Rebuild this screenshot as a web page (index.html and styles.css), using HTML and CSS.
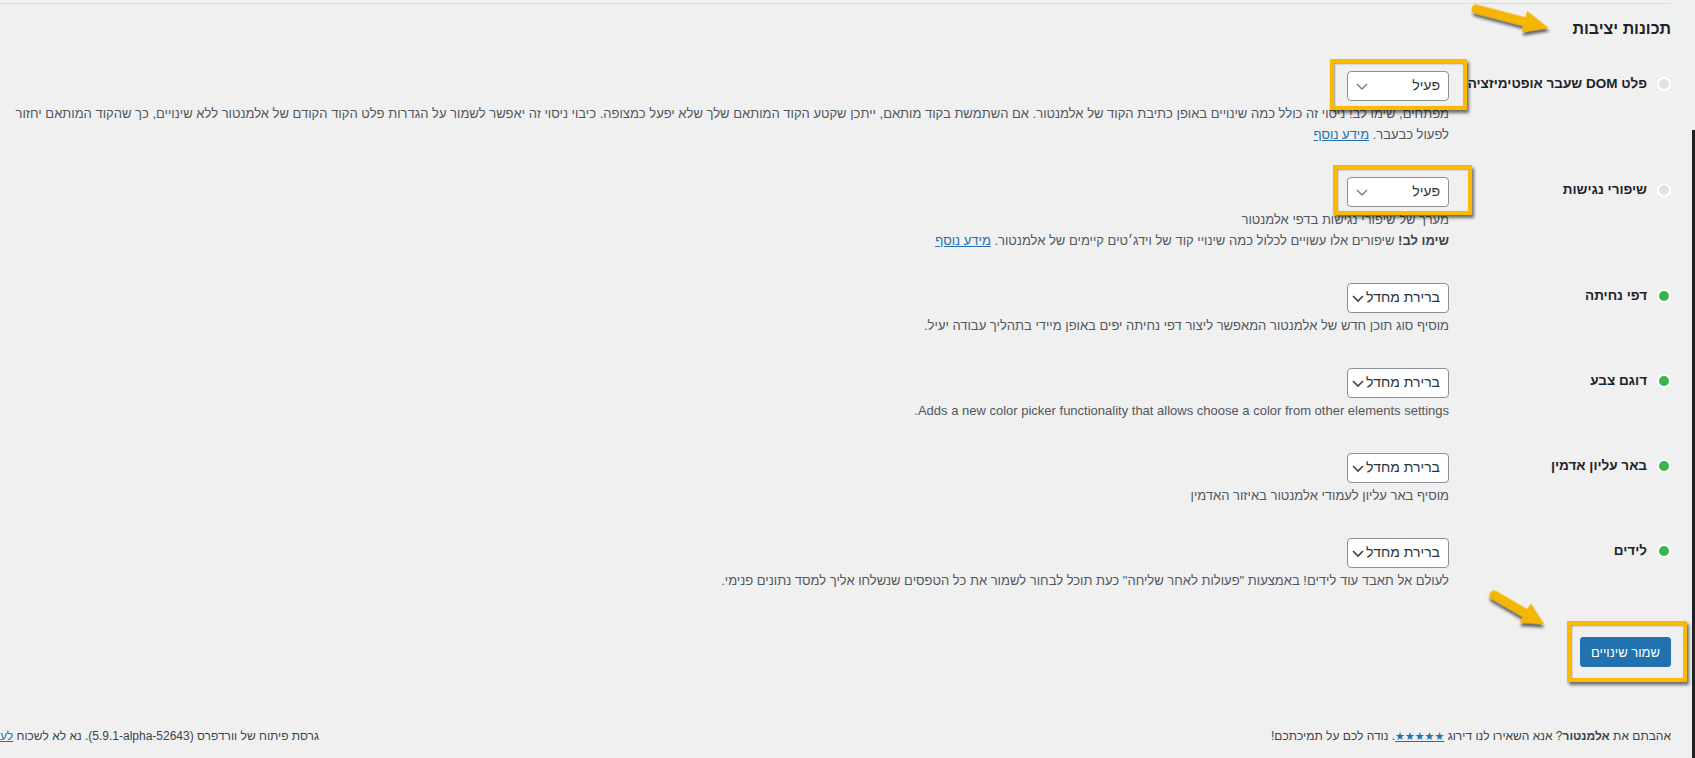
FILE: index.html
```html
<!DOCTYPE html>
<html lang="he" dir="rtl">
  <head>
    <meta charset="UTF-8" />
    <meta name="viewport" content="width=device-width, initial-scale=1.0" />
    <title>ניסויים</title>
    <link rel="stylesheet" href="styles.css">
  </head>
  <body>
    <div class="admin-edge"></div>
    <div class="wrap">
      <div class="tabs-line"></div>
      <h2 class="section-title">תכונות יציבות</h2>

      <div class="exp-list">
        <div class="exp-row">
          <div class="exp-title"><span class="dot"></span>פלט DOM שעבר אופטימיזציה</div>
          <div class="exp-field">
            <div class="select"><span>פעיל</span><svg class="chev" width="16" height="16" viewBox="0 0 16 16"><polyline points="3,6 8,11 13,6" /></svg></div>
            <p class="desc">מפתחים, שימו לב! ניסוי זה כולל כמה שינויים באופן כתיבת הקוד של אלמנטור. אם השתמשת בקוד מותאם, ייתכן שקטע הקוד המותאם שלך שלא יפעל כמצופה. כיבוי ניסוי זה יאפשר לשמור על הגדרות פלט הקוד הקודם של אלמנטור ללא שינויים, כך שהקוד המותאם יחזור<br>לפעול כבעבר. <a href="#">מידע נוסף</a></p>
          </div>
        </div>

        <div class="exp-row">
          <div class="exp-title"><span class="dot"></span>שיפורי נגישות</div>
          <div class="exp-field">
            <div class="select"><span>פעיל</span><svg class="chev" width="16" height="16" viewBox="0 0 16 16"><polyline points="3,6 8,11 13,6" /></svg></div>
            <p class="desc">מערך של שיפורי נגישות בדפי אלמנטור<br><strong>שימו לב!</strong> שיפורים אלו עשויים לכלול כמה שינויי קוד של וידג׳טים קיימים של אלמנטור. <a href="#">מידע נוסף</a></p>
          </div>
        </div>

        <div class="exp-row">
          <div class="exp-title"><span class="dot on"></span>דפי נחיתה</div>
          <div class="exp-field">
            <div class="select"><span>ברירת מחדל</span><svg class="chev dark" width="16" height="16" viewBox="0 0 16 16"><polyline points="3,6 8,11 13,6" /></svg></div>
            <p class="desc">מוסיף סוג תוכן חדש של אלמנטור המאפשר ליצור דפי נחיתה יפים באופן מיידי בתהליך עבודה יעיל.</p>
          </div>
        </div>

        <div class="exp-row">
          <div class="exp-title"><span class="dot on"></span>דוגם צבע</div>
          <div class="exp-field">
            <div class="select"><span>ברירת מחדל</span><svg class="chev dark" width="16" height="16" viewBox="0 0 16 16"><polyline points="3,6 8,11 13,6" /></svg></div>
            <p class="desc">Adds a new color picker functionality that allows choose a color from other elements settings.</p>
          </div>
        </div>

        <div class="exp-row">
          <div class="exp-title"><span class="dot on"></span>באר עליון אדמין</div>
          <div class="exp-field">
            <div class="select"><span>ברירת מחדל</span><svg class="chev dark" width="16" height="16" viewBox="0 0 16 16"><polyline points="3,6 8,11 13,6" /></svg></div>
            <p class="desc">מוסיף באר עליון לעמודי אלמנטור באיזור האדמין</p>
          </div>
        </div>

        <div class="exp-row">
          <div class="exp-title"><span class="dot on"></span>לידים</div>
          <div class="exp-field">
            <div class="select"><span>ברירת מחדל</span><svg class="chev dark" width="16" height="16" viewBox="0 0 16 16"><polyline points="3,6 8,11 13,6" /></svg></div>
            <p class="desc">לעולם אל תאבד עוד לידים! באמצעות "פעולות לאחר שליחה" כעת תוכל לבחור לשמור את כל הטפסים שנשלחו אליך למסד נתונים פנימי.</p>
          </div>
        </div>
      </div>

      <p class="submit"><button class="btn-primary">שמור שינויים</button></p>

      <div class="footer">
        <p class="footer-left">אהבתם את <strong>אלמנטור</strong>? אנא השאירו לנו דירוג <a href="#" class="stars">★★★★★</a>. נודה לכם על תמיכתכם!</p>
        <p class="footer-upgrade">גרסת פיתוח של וורדפרס <span dir="ltr">(5.9.1-alpha-52643)</span>. נא לא לשכוח <a href="#">לעדכן</a>.</p>
      </div>
    </div>

    <!-- annotations drawn over the screenshot -->
    <div class="mark mark-1"></div>
    <div class="mark mark-2"></div>
    <div class="mark mark-3"></div>
    <svg class="arrows" width="1695" height="758" viewBox="0 0 1695 758">
      <defs>
        <filter id="shade" x="-20%" y="-40%" width="140%" height="180%">
          <feDropShadow dx="2" dy="3" stdDeviation="1.5" flood-color="#000" flood-opacity="0.6" />
        </filter>
      </defs>
      <g filter="url(#shade)" transform="translate(1476 9) rotate(14.6)">
        <line x1="0" y1="0" x2="56" y2="0" class="arrow-shaft" />
        <polygon points="50,-11 75,0 50,11" class="arrow-head" />
      </g>
      <g filter="url(#shade)" transform="translate(1494 595) rotate(30)">
        <line x1="0" y1="0" x2="40" y2="0" class="arrow-shaft" />
        <polygon points="36,-11 58,0 36,11" class="arrow-head" />
      </g>
    </svg>
  </body>
</html>
```

FILE: styles.css
```css
html {
  overflow: hidden;
}
body {
  margin: 0;
  background-color: #f0f0f1;
  color: #3c434a;
  font-family: "Liberation Sans", Arial, sans-serif;
  font-size: 13px;
  line-height: 1.4;
  position: relative;
  height: 758px;
}
a {
  color: #2271b1;
  text-decoration: underline;
}
.admin-edge {
  position: absolute;
  top: 130px;
  right: 0;
  width: 3px;
  bottom: 0;
  background-color: #1d2327;
}
.wrap {
  margin-right: 24px;
  padding-top: 3px;
}
.tabs-line {
  border-top: 1px solid #dcdcde;
  margin-left: -400px;
}
.section-title {
  margin: 14px 0 15px;
  font-size: 16px;
  line-height: 22px;
  font-weight: bold;
  color: #1d2327;
}
.exp-row {
  display: flex;
  padding: 16px 0;
}
.exp-title {
  flex: 0 0 222px;
  display: flex;
  align-items: center;
  gap: 12px;
  height: 26px;
  font-size: 13.5px;
  font-weight: bold;
  color: #1d2327;
  white-space: nowrap;
}
.dot {
  width: 10px;
  height: 10px;
  margin-right: 2px;
  border-radius: 50%;
  background-color: #e2e2e3;
  box-shadow: 0 0 0 2px #fff;
}
.dot.on {
  background-color: #39b54a;
}
.exp-field {
  flex: 1;
}
.select {
  width: 102px;
  height: 30px;
  box-sizing: border-box;
  display: flex;
  align-items: center;
  justify-content: space-between;
  padding: 0 8px 0 6px;
  border: 1px solid #8c8f94;
  border-radius: 4px;
  background-color: #fff;
  font-size: 14px;
  color: #2c3338;
  white-space: nowrap;
}
.chev {
  flex: none;
  fill: none;
  stroke: #787c82;
  stroke-width: 1.4;
}
.chev.dark {
  stroke: #3c434a;
  stroke-width: 1.6;
}
.desc {
  margin: 2px 0 0;
  line-height: 21px;
  color: #50575e;
  white-space: nowrap;
}
.desc strong {
  color: #3c434a;
}
.submit {
  margin: 20px 0;
  padding: 10px 0;
}
.btn-primary {
  height: 30px;
  padding: 0 10px;
  border: 1px solid #2271b1;
  border-radius: 3px;
  background-color: #2271b1;
  color: #fff;
  font-family: inherit;
  font-size: 13px;
}
.footer {
  display: flex;
  margin-top: 49px;
  font-size: 12px;
  white-space: nowrap;
}
.footer p {
  margin: 0;
  line-height: 20px;
}
.footer-left {
  flex: 0 0 1352px;
}
.footer-left strong {
  color: #3c434a;
}
.stars {
  font-family: "DejaVu Sans", sans-serif;
  font-size: 11px;
}
.mark {
  position: absolute;
  border: 4px solid #fbb900;
  box-shadow: 2px 3px 3px rgba(0, 0, 0, 0.55), inset 1px 1px 2px rgba(0, 0, 0, 0.35);
}
.mark-1 {
  left: 1330px;
  top: 59px;
  width: 129px;
  height: 43px;
}
.mark-2 {
  left: 1333px;
  top: 165px;
  width: 131px;
  height: 42px;
}
.mark-3 {
  left: 1567px;
  top: 621px;
  width: 112px;
  height: 53px;
}
.arrows {
  position: absolute;
  top: 0;
  left: 0;
  pointer-events: none;
}
.arrow-shaft {
  stroke: #f6b500;
  stroke-width: 9;
  stroke-linecap: round;
}
.arrow-head {
  fill: #f6b500;
}
```
